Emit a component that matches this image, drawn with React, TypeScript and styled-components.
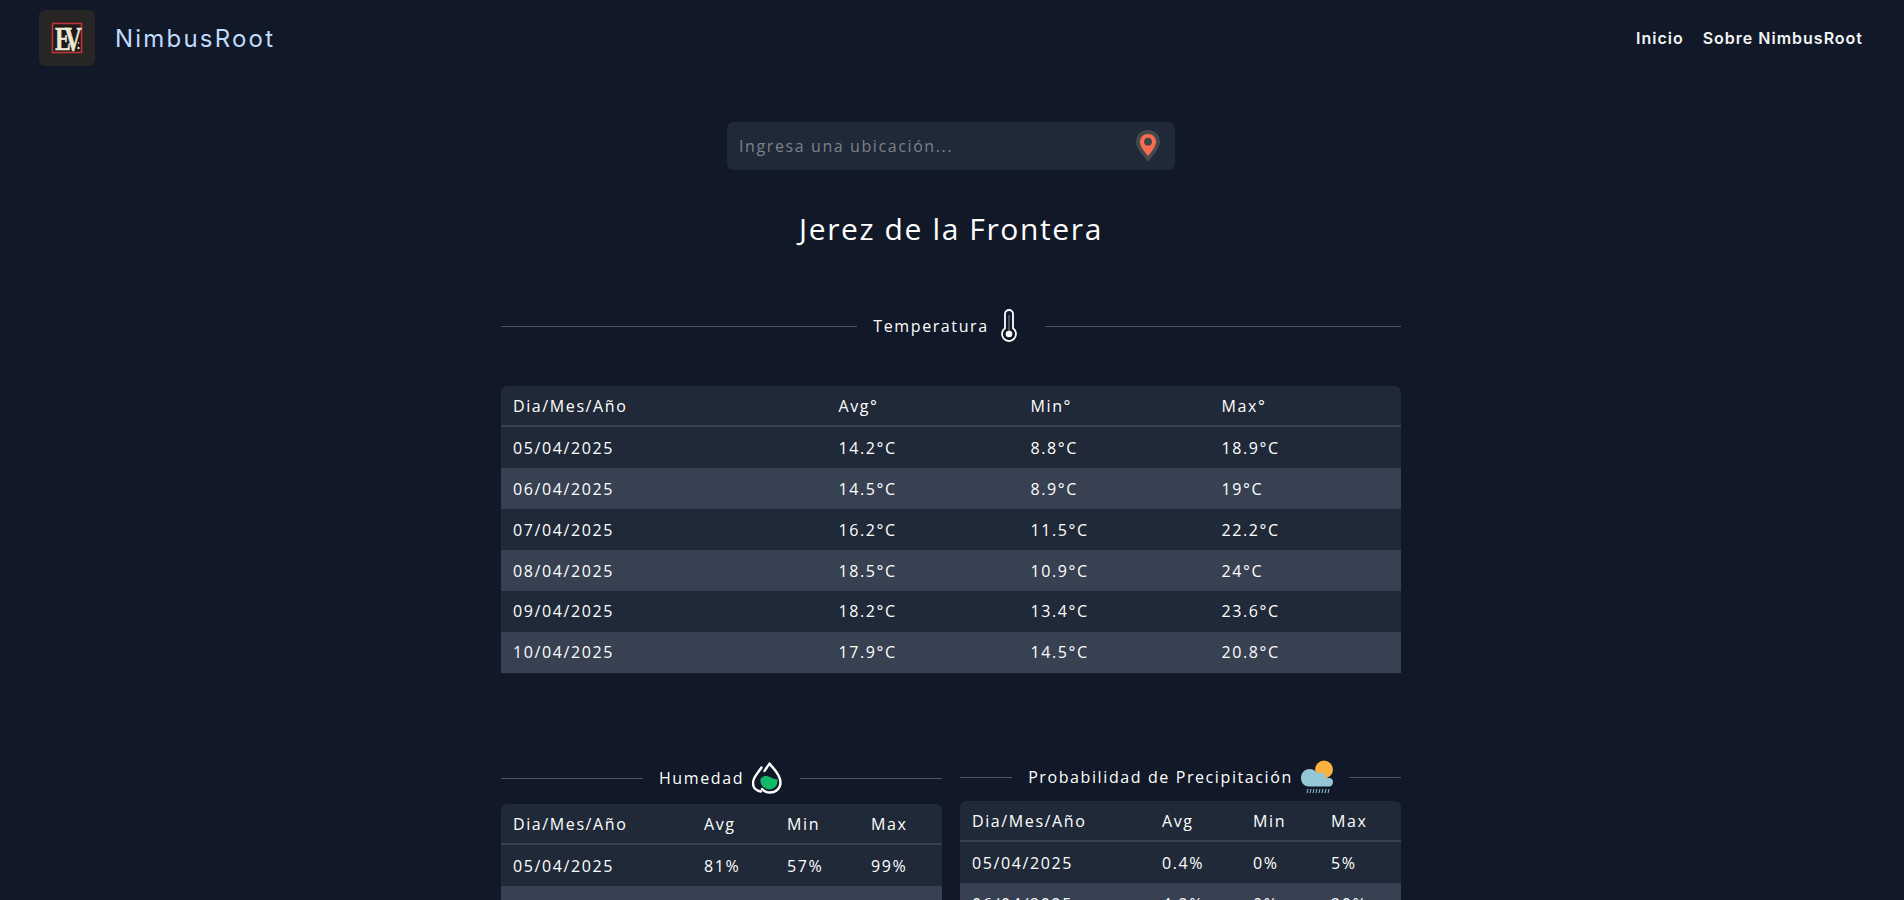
import styled, { createGlobalStyle } from "styled-components";

const GlobalStyle = createGlobalStyle`
  html {
    scrollbar-width: none;
  }

  body {
    margin: 0;
    background-color: #111827;
    color: #ffffff;
    font-family: "Open Sans", sans-serif;
  }
`;

const Page = styled.div`
  width: 1902px;
`;

const Header = styled.header`
  height: 76px;
  padding: 0 39px;
  display: flex;
  align-items: center;
  justify-content: space-between;
  box-sizing: border-box;
`;

const Brand = styled.div`
  display: flex;
  align-items: center;
  gap: 20px;
`;

const BrandName = styled.span`
  font-family: "Inter", sans-serif;
  font-size: 24px;
  font-weight: 400;
  letter-spacing: 2.2px;
  color: #bfdbfe;
`;

const Nav = styled.nav`
  display: flex;
  gap: 19px;
`;

const NavLink = styled.a`
  font-family: "Inter", sans-serif;
  font-size: 16px;
  font-weight: 600;
  letter-spacing: 1px;
  color: #f3f4f6;
  text-decoration: none;
`;

const Main = styled.main`
  width: 900px;
  margin: 0 auto;
  padding-top: 46px;
  display: flex;
  flex-direction: column;
`;

const SearchBox = styled.div`
  width: 448px;
  height: 48px;
  margin: 0 auto;
  padding: 0 14px 0 10px;
  box-sizing: border-box;
  display: flex;
  align-items: center;
  background-color: #1f2937;
  border-radius: 6px;
`;

const SearchInput = styled.input`
  flex: 1;
  min-width: 0;
  border: none;
  outline: none;
  background: transparent;
  color: #ffffff;
  font-family: "Open Sans", sans-serif;
  font-size: 16px;
  letter-spacing: 0.1em;

  &::placeholder {
    color: #7c828c;
    opacity: 1;
  }
`;

const City = styled.h1`
  margin: 38px 0 0;
  height: 42px;
  line-height: 42px;
  text-align: center;
  font-size: 30px;
  font-weight: 400;
  letter-spacing: 1.62px;
`;

const SectionTitle = styled.div<{ $mt?: number; $mb?: number }>`
  display: flex;
  align-items: center;
  gap: 16px;
  height: 34px;
  margin-top: ${(props) => props.$mt ?? 0}px;
  margin-bottom: ${(props) => props.$mb ?? 0}px;
`;

const Line = styled.span`
  flex: 1;
  height: 1px;
  background-color: #4b5563;
`;

const TitleContent = styled.div`
  display: flex;
  align-items: center;
  gap: 8px;
  font-size: 16px;
  letter-spacing: 0.1em;
  line-height: 24px;
`;

const Icon = styled.svg`
  display: block;
  flex-shrink: 0;
`;

const Table = styled.table`
  width: 100%;
  table-layout: fixed;
  border-collapse: separate;
  border-spacing: 0;
  font-size: 16px;
  letter-spacing: 0.1em;
`;

const Th = styled.th<{ $w: number }>`
  width: ${(props) => props.$w}px;
  padding: 8.1px 12px 7.4px;
  box-sizing: border-box;
  line-height: 24px;
  text-align: left;
  font-weight: 400;
  background-color: #1f2937;
  border-bottom: 2px solid #374151;

  &:first-child {
    border-top-left-radius: 6px;
  }

  &:last-child {
    border-top-right-radius: 6px;
  }
`;

const Tr = styled.tr`
  background-color: #1f2937;

  &:nth-child(even) {
    background-color: #374151;
  }
`;

const Td = styled.td`
  padding: 8.45px 12px;
  line-height: 24px;
  white-space: nowrap;
`;

const Columns = styled.div`
  margin-top: 87.7px;
  display: grid;
  grid-template-columns: 441px 441px;
  justify-content: space-between;
  align-items: start;
`;

const Column = styled.section<{ $pt: number }>`
  padding-top: ${(props) => props.$pt}px;
`;

const LogoIcon = () => (
  <Icon width="56" height="56" viewBox="0 0 56 56">
    <rect width="56" height="56" rx="6" fill="#272625" />
    <rect x="13.500" y="13.500" width="29" height="29" fill="#1d1a18" stroke="#c0333a" strokeWidth="1.600" />
    <text
      transform="translate(16 40) scale(0.7 1)"
      fontFamily="Liberation Serif"
      fontSize="34"
      fontWeight="700"
      letterSpacing="-9"
      fill="#ece8d8"
      stroke="#ece8d8"
      strokeWidth="0.5"
    >
      EV
    </text>
    <circle cx="39.500" cy="38" r="1.200" fill="#e8e4d4" />
    <circle cx="39.500" cy="33" r="0.800" fill="#e8e4d4" />
  </Icon>
);

const PinIcon = () => (
  <Icon width="26" height="34" viewBox="0 0 26 34">
    <path d="M13 1C6.200 1 1 6.200 1 12.800 1 19.500 8 26.500 13 33c5-6.500 12-13.500 12-20.200C25 6.200 19.800 1 13 1z" fill="#434a4b" />
    <path d="M13 5c-4.500 0-8 3.500-8 7.900C5 17 9.300 22.500 13 27c3.700-4.500 8-10 8-14.100C21 8.500 17.500 5 13 5z" fill="#ff6b52" />
    <circle cx="13" cy="12.700" r="3.900" fill="#3a4648" />
  </Icon>
);

const ThermometerIcon = () => (
  <Icon width="32" height="34" viewBox="0 0 32 34" fill="none">
    <path
      d="M8 19.300V5a4 4 0 0 1 8 0v14.300a7 7 0 1 1-8 0z"
      stroke="#fff"
      strokeWidth="1.800"
    />
    <path d="M12 6v18" stroke="#fff" strokeWidth="1" opacity="0.5" />
    <circle cx="12" cy="25" r="3.300" fill="#fff" />
  </Icon>
);

const HumidityIcon = () => (
  <Icon width="32" height="32" viewBox="0 0 32 32" fill="none">
    <path
      d="M9.500 5.500C6 11 1 15 1 21c0 4.500 3 8 8 8.500"
      stroke="#fff"
      strokeWidth="2.400"
      strokeLinecap="round"
    />
    <path
      d="M12.500 9c1.500-2.500 3.500-5 5-7.500C20.500 6 28.500 12 28.500 20.500c0 5.500-4.500 10-10.500 10-3 0-6-1.200-8-3.500"
      stroke="#fff"
      strokeWidth="2.400"
      strokeLinecap="round"
      strokeLinejoin="round"
    />
    <path
      d="M8.500 17c3-4 6.500-3.500 9.500-2s5 2 7.500 2.500c.5 6-3 10-8 10S7.500 23 8.500 17z"
      fill="#12b76a"
    />
  </Icon>
);

const RainIcon = () => (
  <Icon width="32" height="34" viewBox="0 0 32 34">
    <circle cx="23" cy="9.500" r="9" fill="#fbb040" />
    <path
      d="M8.500 9c3.500 0 6 1.500 7.500 4.500 1-.7 2.500-1 3.500-1 3 0 5 2 5.500 5.500h3c2.500 0 4 1.500 4 4 0 2.500-1.500 4.500-4 4.500H8C3 26.500 0 22.500 0 18 0 13 3.500 9 8.500 9z"
      fill="#94c6d6"
    />
    <path
      d="M6 33l1-4M9 33l1-4M12 33l1-4M15 33l1-4M18 33l1-4M21 33l1-4M24 33l1-4M27 33l1-4"
      stroke="#94c6d6"
      strokeWidth="1"
    />
  </Icon>
);

type Column = { label: string; width: number };

const DataTable = ({ columns, rows }: { columns: Column[]; rows: string[][] }) => (
  <Table>
    <thead>
      <tr>
        {columns.map((column) => (
          <Th key={column.label} $w={column.width}>
            {column.label}
          </Th>
        ))}
      </tr>
    </thead>
    <tbody>
      {rows.map((row) => (
        <Tr key={row[0]}>
          {row.map((value, index) => (
            <Td key={index}>{value}</Td>
          ))}
        </Tr>
      ))}
    </tbody>
  </Table>
);

const temperatureRows = [
  ["05/04/2025", "14.2°C", "8.8°C", "18.9°C"],
  ["06/04/2025", "14.5°C", "8.9°C", "19°C"],
  ["07/04/2025", "16.2°C", "11.5°C", "22.2°C"],
  ["08/04/2025", "18.5°C", "10.9°C", "24°C"],
  ["09/04/2025", "18.2°C", "13.4°C", "23.6°C"],
  ["10/04/2025", "17.9°C", "14.5°C", "20.8°C"],
];

const humidityRows = [
  ["05/04/2025", "81%", "57%", "99%"],
  ["06/04/2025", "78%", "55%", "96%"],
];

const rainRows = [
  ["05/04/2025", "0.4%", "0%", "5%"],
  ["06/04/2025", "4.2%", "0%", "20%"],
];

export default function App() {
  return (
    <Page>
      <GlobalStyle />
      <Header>
        <Brand>
          <LogoIcon />
          <BrandName>NimbusRoot</BrandName>
        </Brand>
        <Nav>
          <NavLink href="#">Inicio</NavLink>
          <NavLink href="#">Sobre NimbusRoot</NavLink>
        </Nav>
      </Header>
      <Main>
        <SearchBox>
          <SearchInput placeholder="Ingresa una ubicación..." />
          <PinIcon />
        </SearchBox>
        <City>Jerez de la Frontera</City>
        <SectionTitle $mt={59} $mb={43}>
          <Line />
          <TitleContent>
            Temperatura
            <ThermometerIcon />
          </TitleContent>
          <Line />
        </SectionTitle>
        <DataTable
          columns={[
            { label: "Dia/Mes/Año", width: 325.5 },
            { label: "Avg°", width: 192 },
            { label: "Min°", width: 191 },
            { label: "Max°", width: 191.5 },
          ]}
          rows={temperatureRows}
        />
        <Columns>
          <Column $pt={1}>
            <SectionTitle $mb={8.5}>
              <Line />
              <TitleContent>
                Humedad
                <HumidityIcon />
              </TitleContent>
              <Line />
            </SectionTitle>
            <DataTable
              columns={[
                { label: "Dia/Mes/Año", width: 191 },
                { label: "Avg", width: 83 },
                { label: "Min", width: 84 },
                { label: "Max", width: 83 },
              ]}
              rows={humidityRows}
            />
          </Column>
          <Column $pt={0}>
            <SectionTitle $mb={6.5}>
              <Line />
              <TitleContent>
                Probabilidad de Precipitación
                <RainIcon />
              </TitleContent>
              <Line />
            </SectionTitle>
            <DataTable
              columns={[
                { label: "Dia/Mes/Año", width: 190 },
                { label: "Avg", width: 91 },
                { label: "Min", width: 78 },
                { label: "Max", width: 82 },
              ]}
              rows={rainRows}
            />
          </Column>
        </Columns>
      </Main>
    </Page>
  );
}
